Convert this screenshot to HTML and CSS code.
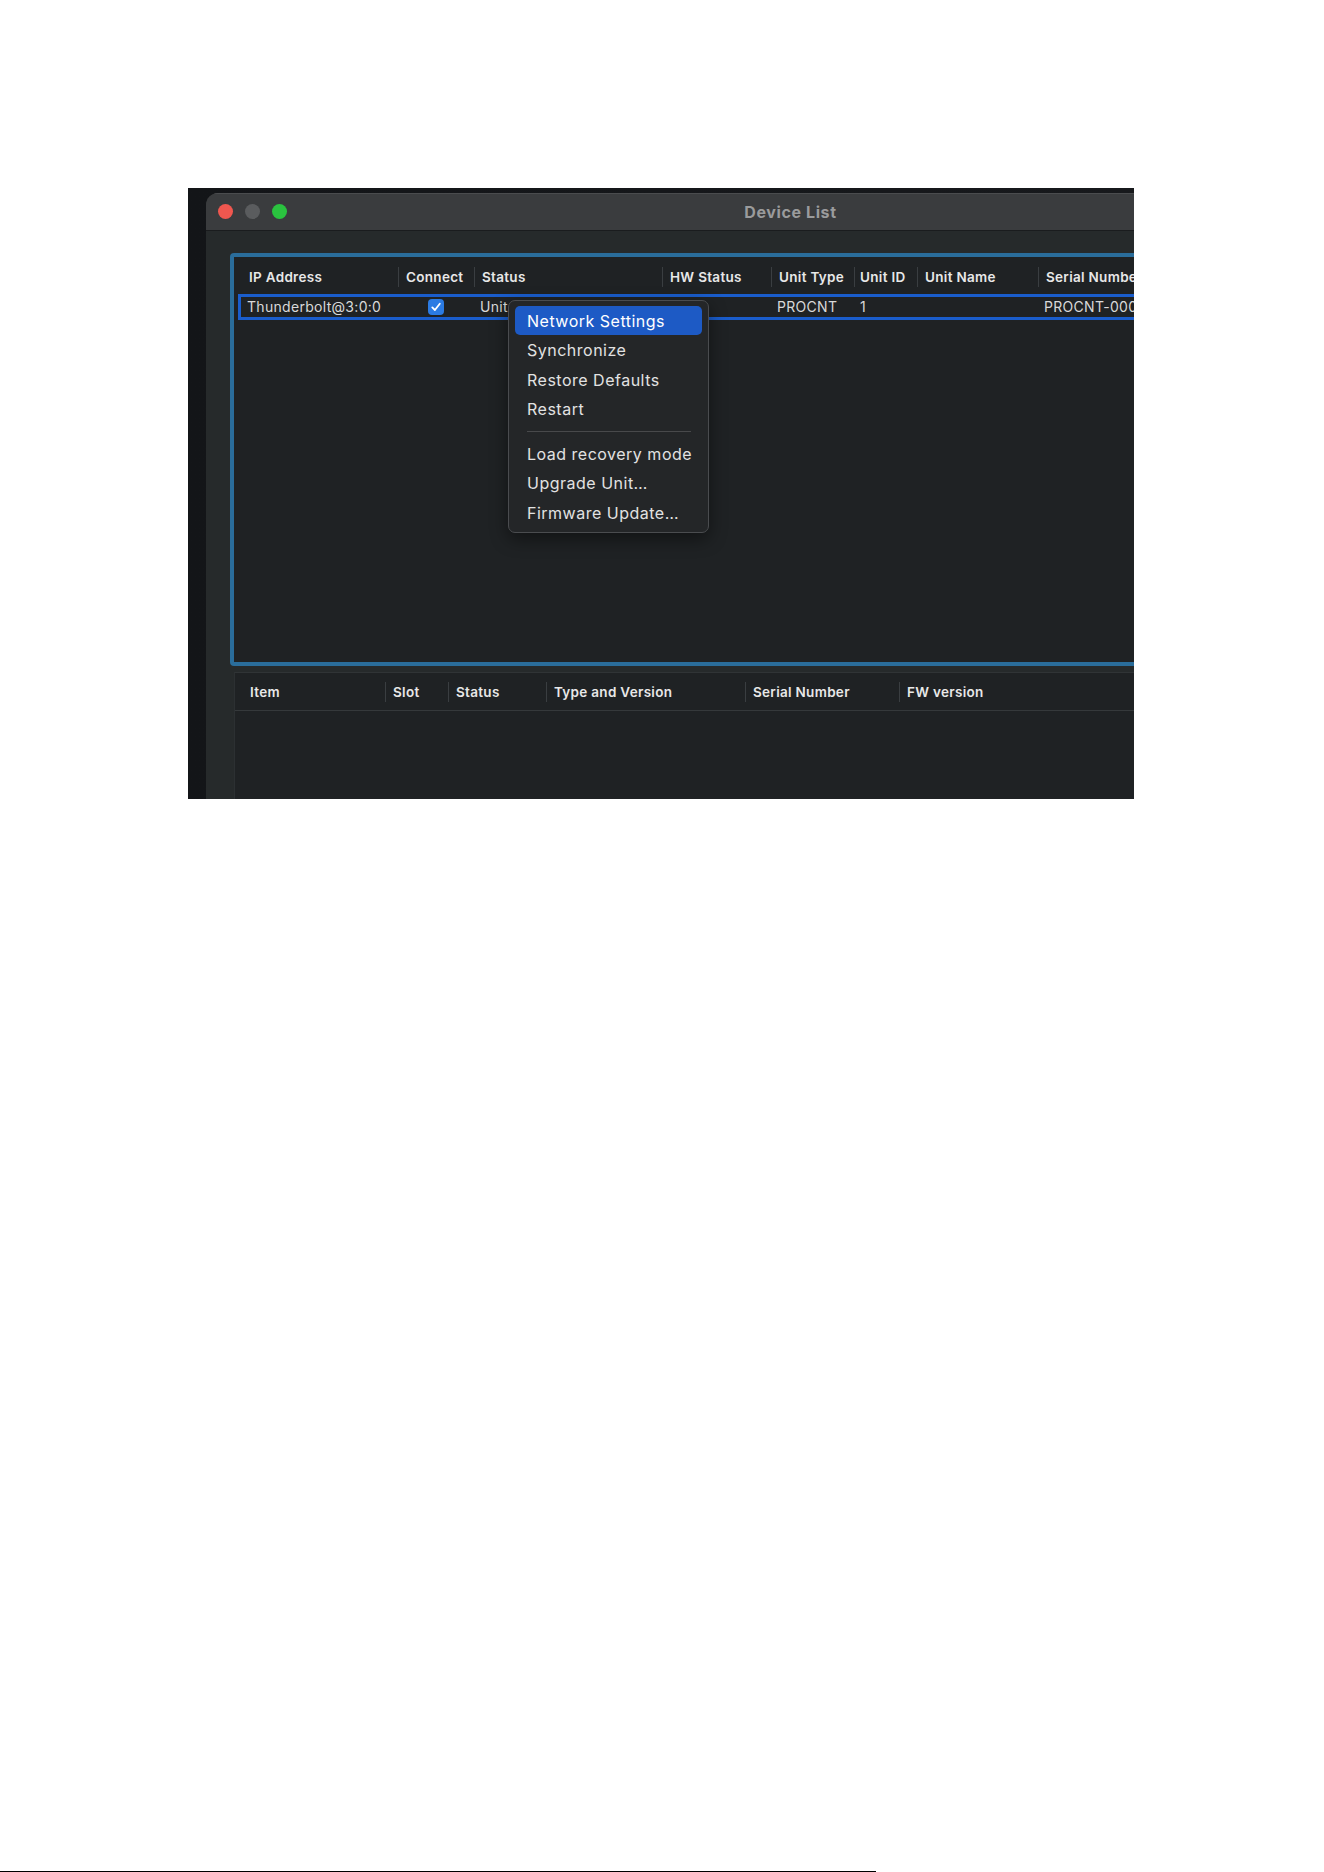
FILE: index.html
```html
<!DOCTYPE html>
<html lang="en">
<head>
  <meta charset="UTF-8" />
  <title>Device List</title>
  <link rel="stylesheet" href="styles.css">
</head>
<body>
  <div class="shot">
    <div class="window">
      <div class="titlebar">
        <div class="lights">
          <span class="light red"></span>
          <span class="light grey"></span>
          <span class="light green"></span>
        </div>
        <div class="title">Device List</div>
        <div></div>
      </div>

      <div class="content">
        <div class="device-table">
          <div class="dev-head">
            <div class="hcell first">IP Address</div>
            <div class="hcell">Connect</div>
            <div class="hcell">Status</div>
            <div class="hcell">HW Status</div>
            <div class="hcell">Unit Type</div>
            <div class="hcell tight">Unit ID</div>
            <div class="hcell">Unit Name</div>
            <div class="hcell">Serial Number</div>
          </div>
          <div class="dev-row">
            <div class="cell">Thunderbolt@3:0:0</div>
            <div class="cell center">
              <span class="checkbox">
                <svg width="12" height="12" viewBox="0 0 12 12"><path d="M2.3 6.4 L4.9 9 L9.8 2.8" fill="none" stroke="#fff" stroke-width="1.8" stroke-linecap="round" stroke-linejoin="round"/></svg>
              </span>
            </div>
            <div class="cell">Unit</div>
            <div class="cell"></div>
            <div class="cell">PROCNT</div>
            <div class="cell">1</div>
            <div class="cell"></div>
            <div class="cell">PROCNT-0001</div>
          </div>
        </div>

        <div class="module-table">
          <div class="mod-head">
            <div class="hcell first">Item</div>
            <div class="hcell">Slot</div>
            <div class="hcell">Status</div>
            <div class="hcell">Type and Version</div>
            <div class="hcell">Serial Number</div>
            <div class="hcell">FW version</div>
          </div>
        </div>
      </div>
    </div>

    <!-- context menu over the selected row -->
    <div class="context-menu">
      <div class="menu-item active">Network Settings</div>
      <div class="menu-item">Synchronize</div>
      <div class="menu-item">Restore Defaults</div>
      <div class="menu-item">Restart</div>
      <div class="menu-sep"></div>
      <div class="menu-item">Load recovery mode</div>
      <div class="menu-item">Upgrade Unit…</div>
      <div class="menu-item">Firmware Update…</div>
    </div>
  </div>

  <div class="footer-line"></div>
</body>
</html>
```

FILE: styles.css
```css
body {
  margin: 0;
  background: #ffffff;
  font-family: Inter, "Liberation Sans", sans-serif;
}
.shot {
  position: relative;
  box-sizing: border-box;
  margin: 188px 0 0 188px;
  width: 946px;
  height: 611px;
  padding: 5px 0 0 18px;
  overflow: hidden;
  background: linear-gradient(90deg, #131518, #17191c);
}
.window {
  width: 1169px;
  height: 720px;
  border-radius: 12px 12px 0 0;
  background: #262a2b;
  overflow: hidden;
}
.titlebar {
  display: grid;
  grid-template-columns: 1fr auto 1fr;
  align-items: center;
  height: 37px;
  background: #3a3c3e;
  border-bottom: 1px solid #1a1c1e;
  box-shadow: inset 0 1px 0 #4a4c4e;
}
.lights {
  display: flex;
  gap: 12px;
  padding-left: 12px;
}
.light {
  width: 15px;
  height: 15px;
  border-radius: 50%;
}
.red { background: #f0574f; }
.grey { background: #5a5c5e; }
.green { background: #2ac33f; }
.title {
  color: #9a9b9c;
  font-size: 16px;
  font-weight: 700;
  letter-spacing: 0.6px;
}
.content {
  padding: 22px 24px 0 24px;
}
.device-table {
  box-sizing: border-box;
  height: 413px;
  border: 4px solid #2a6d9b;
  border-radius: 4px;
  background: #1f2224;
}
.dev-head, .dev-row {
  display: grid;
  grid-template-columns: 164px 76px 188px 109px 83px 63px 121px 1fr;
}
.dev-head {
  box-sizing: border-box;
  height: 37px;
  padding-top: 2px;
  align-items: center;
}
.mod-head {
  display: grid;
  grid-template-columns: 150px 63px 98px 199px 154px 1fr;
  height: 37px;
  align-items: center;
  border-bottom: 1px solid #35393b;
}
.hcell {
  height: 20px;
  line-height: 20px;
  padding-left: 7px;
  border-left: 1px solid #3a3e41;
  color: #e8e8e8;
  font-size: 13.5px;
  font-weight: 600;
  letter-spacing: 0.3px;
  white-space: nowrap;
}
.hcell.first {
  border-left: none;
  padding-left: 15px;
}
.hcell.tight {
  padding-left: 5px;
}
.dev-row {
  grid-template-columns: 157px 76px 188px 109px 83px 63px 121px 1fr;
  height: 20px;
  margin: 0 4px;
  border: 3px solid #1a5dcc;
  align-items: center;
}
.cell {
  padding-left: 6px;
  color: #d9d9d9;
  font-size: 14px;
  line-height: 18px;
  letter-spacing: 0.3px;
  white-space: nowrap;
}
.cell.center {
  padding-left: 0;
  display: flex;
  justify-content: center;
}
.checkbox {
  display: flex;
  align-items: center;
  justify-content: center;
  width: 16px;
  height: 16px;
  border-radius: 4px;
  background: #2b7be3;
}
.module-table {
  margin-top: 6px;
  margin-left: 4px;
  height: 200px;
  border-top: 1px solid #303436;
  border-left: 1px solid #2c3032;
  background: #1f2224;
}
.context-menu {
  position: absolute;
  left: 320px;
  top: 112px;
  box-sizing: border-box;
  width: 201px;
  padding: 5px 6px 5px;
  background: #242628;
  border: 1px solid #4a4c4f;
  border-radius: 7px;
  box-shadow: 0 6px 18px rgba(0, 0, 0, 0.45);
}
.menu-item {
  height: 29.3px;
  line-height: 31px;
  padding-left: 12px;
  border-radius: 5px;
  color: #e2e2e2;
  font-size: 16px;
  letter-spacing: 0.5px;
  white-space: nowrap;
}
.menu-item.active {
  background: #1d5ac5;
  color: #ffffff;
}
.menu-sep {
  height: 1px;
  margin: 8px 11px 7px 12px;
  background: #48494b;
}
.footer-line {
  margin-top: 1072px;
  width: 876px;
  height: 1px;
  background: #000000;
}
```
